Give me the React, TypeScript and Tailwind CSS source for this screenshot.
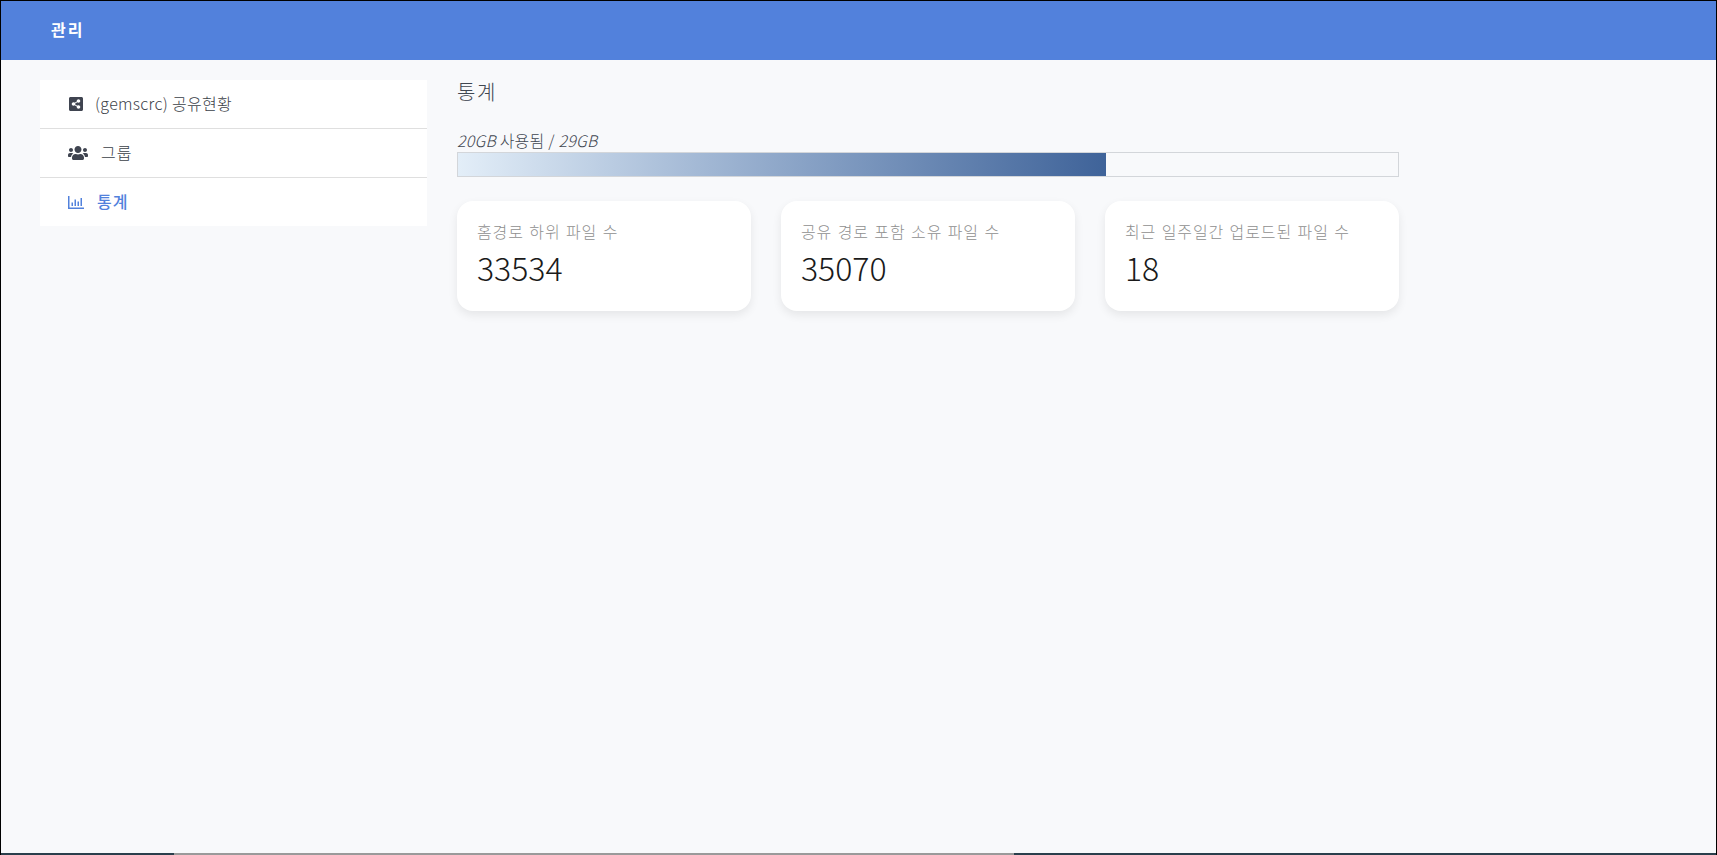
import { FaShareAltSquare, FaUsers } from 'react-icons/fa';

const font = "font-['Noto_Sans_CJK_KR','Noto_Sans',sans-serif]";

const stats = [
  { label: '홈경로 하위 파일 수', value: '33534' },
  { label: '공유 경로 포함 소유 파일 수', value: '35070' },
  { label: '최근 일주일간 업로드된 파일 수', value: '18' },
];

function ChartIcon() {
  return (
    <svg viewBox="0 0 16 13" className="w-4 h-[13px]" fill="currentColor">
      <path d="M0 0h1.5v11.5H16V13H0z" />
      <path d="M3.5 6.5h1.5v3.5H3.5zM6.5 3.5h1.5v6.5H6.5zM9.5 5.5h1.5v4.5H9.5zM12.5 2h1.5v8h-1.5z" />
    </svg>
  );
}

export default function App() {
  return (
    <div className={`${font} h-[855px] overflow-hidden flex flex-col bg-[#f8f9fb] border-x border-t border-black`}>
      <header className="h-[59px] shrink-0 bg-[#5281dc] flex items-center pl-[50px] pb-1 text-white text-[16px] font-semibold tracking-[2px]">
        관리
      </header>
      <div className="flex flex-1 items-start pt-5 pl-[39px]">
        <nav className="w-[387px] bg-white text-[16px] text-[#3b4148] font-light">
          <div className="h-[49px] flex items-center pl-7 border-b border-[#dfdfdf]">
            <FaShareAltSquare className="w-4 h-4 text-[#3f4450]" />
            <span className="ml-[11px] mb-0.5 tracking-[0.3px]">(gemscrc) 공유현황</span>
          </div>
          <div className="h-[49px] flex items-center pl-7 border-b border-[#dfdfdf]">
            <FaUsers className="w-5 h-4 text-[#3f4450]" />
            <span className="ml-[13px] mb-0.5 tracking-[1px]">그룹</span>
          </div>
          <div className="h-[48px] flex items-center pl-7 text-[#5281dc] font-medium">
            <ChartIcon />
            <span className="ml-[13px] mb-0.5 tracking-[1px]">통계</span>
          </div>
        </nav>
        <main className="w-[942px] ml-[30px] -mt-[2px]">
          <h2 className="mt-[2px] text-[20px] leading-6 text-[#3f4650] font-light tracking-[1.5px]">통계</h2>
          <p className="mt-[26px] text-[16px] leading-5 text-[#3f4650] font-light tracking-[0.2px]">
            <i>20GB</i> 사용됨 / <i>29GB</i>
          </p>
          <div className="h-[25px] mt-[2px] border border-[#d3d6da]">
            <div className="h-full w-[68.9%] bg-gradient-to-r from-[#e3eef8] to-[#3f6399]" />
          </div>
          <div className="grid grid-cols-3 gap-[30px] mt-6">
            {stats.map((s) => (
              <div key={s.label} className="h-[110px] bg-white rounded-2xl shadow-[0_4px_10px_rgba(0,0,0,0.08)] px-5 pt-5">
                <div className="text-[16px] leading-5 text-[#8f8f8f] font-light tracking-[0.9px] [word-spacing:1px]">{s.label}</div>
                <div className="mt-2 text-[32px] leading-9 font-light text-[#1a1a1a]">{s.value}</div>
              </div>
            ))}
          </div>
        </main>
      </div>
      <div className="h-[2px] shrink-0 flex bg-[#2a3f4c]">
        <div className="ml-[173px] w-[840px] bg-[#9a9a9a]" />
      </div>
    </div>
  );
}
